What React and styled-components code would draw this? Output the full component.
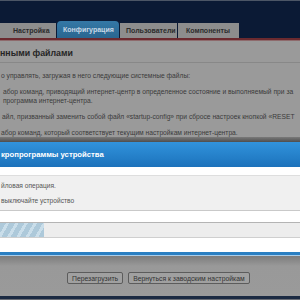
import React from "react";
import styled, { createGlobalStyle } from "styled-components";

const Global = createGlobalStyle`
  html, body { margin: 0; padding: 0; background: #9a9a9a; }
  body { font-family: "Liberation Sans", Arial, sans-serif; }
`;

const Page = styled.div`
  width: 300px;
  height: 300px;
  overflow: hidden;
  display: flex;
  flex-direction: column;
  background: #9a9a9a;
`;

const Header = styled.div`
  height: 37px;
  border-top: 1px solid #4c5666;
  background: #0b1a35;
  display: flex;
  align-items: flex-end;
`;

const TabBar = styled.div`
  display: flex;
  align-items: flex-end;
  gap: 1px;
`;

const Tab = styled.div`
  height: ${(p) => (p.$active ? "17px" : "15px")};
  width: ${(p) => p.$w}px;
  box-sizing: border-box;
  padding-left: ${(p) => p.$pl}px;
  display: flex;
  align-items: center;
  background: ${(p) => (p.$active ? "linear-gradient(#3478a6, #2a6690)" : "#8d8d8d")};
  color: ${(p) => (p.$active ? "#c9d8e6" : "#2c2c2c")};
  border-radius: ${(p) => (p.$active ? "4px 4px 0 0" : "0")};
  font-size: 7px;
  font-weight: bold;
  white-space: nowrap;
`;

const RedRule = styled.div`
  height: 2px;
  background: #6b2a2f;
  border-bottom: 1px solid #8e6a6c;
`;

const Content = styled.div`
  height: 97px;
  padding: 6px 0 0;
  box-sizing: border-box;
  overflow: hidden;
`;

const Heading = styled.div`
  font-size: 8.8px;
  font-weight: bold;
  line-height: 12px;
  color: #262626;
  padding: 0 0 3px 0;
  border-bottom: 1px solid #888888;
  white-space: nowrap;
`;

const Para = styled.div`
  font-size: 6.7px;
  line-height: 9px;
  color: #3a3a3a;
  white-space: nowrap;
  padding-left: ${(p) => p.$pl ?? 1}px;
  margin-top: ${(p) => p.$mt ?? 7}px;
`;

const Modal = styled.div`
  display: flex;
  flex-direction: column;
  background: #ffffff;
`;

const Shadow = styled.div`
  height: 5px;
  background: linear-gradient(#7a7a7a, #4e4e4e);
`;

const ModalTitle = styled.div`
  height: 25px;
  display: flex;
  align-items: center;
  padding-left: 1px;
  background: linear-gradient(#3193dc, #1c72bb);
  color: #ffffff;
  font-size: 7.7px;
  font-weight: bold;
  white-space: nowrap;
`;

const WhiteGap = styled.div`
  height: ${(p) => p.$h}px;
  background: #ffffff;
`;

const ModalBody = styled.div`
  background: #f0f0f0;
  border-top: 1px solid #dedede;
  border-bottom: 1px solid #c9c9c9;
  padding: 2px 0 2px 1px;
`;

const Note = styled.div`
  font-size: 6.6px;
  line-height: 15px;
  color: #555555;
  white-space: nowrap;
`;

const Track = styled.div`
  height: 14px;
  background: #ededed;
  border-top: 1px solid #b4b4b4;
  border-bottom: 1px solid #cfcfcf;
`;

const Fill = styled.div`
  height: 100%;
  background: repeating-linear-gradient(
    -60deg,
    #adc9da 0px,
    #adc9da 5px,
    #cadeea 5px,
    #cadeea 8px
  );
`;

const ModalBottom = styled.div`
  height: 3px;
  background: #2a7fc2;
  border-bottom: 1px solid #a9cdea;
`;

const ButtonBar = styled.div`
  height: 40px;
  box-sizing: border-box;
  padding: 16px 0 0 67px;
  display: flex;
  align-items: flex-start;
  gap: 5px;
  background: linear-gradient(#7c7c7c, #999999 10px, #9a9a9a);
`;

const Button = styled.div`
  height: 12px;
  box-sizing: border-box;
  border: 1px solid #5c5c5c;
  border-radius: 2px;
  background: #a0a0a0;
  color: #333333;
  font-size: 6.8px;
  display: flex;
  align-items: center;
  padding: 0 4px;
  white-space: nowrap;
`;

const Footer = styled.div`
  height: 3px;
  background: #1b2a42;
  border-bottom: 1px solid #6a6e76;
`;

export default function App() {
  return (
    <>
      <Global />
      <Page>
        <Header>
          <TabBar>
            <Tab $w={56} $pl={13}>Настройка</Tab>
            <Tab $w={62} $pl={6} $active>Конфигурация</Tab>
            <Tab $w={57} $pl={6}>Пользователи</Tab>
            <Tab $w={61} $pl={8}>Компоненты</Tab>
          </TabBar>
        </Header>
        <RedRule />
        <Content>
          <Heading>нными файлами</Heading>
          <Para $mt={8}>о управлять, загружая в него следующие системные файлы:</Para>
          <Para $pl={3}>абор команд, приводящий интернет-центр в определенное состояние и выполняемый при за</Para>
          <Para $pl={3} $mt={0}>программа интернет-центра.</Para>
          <Para $pl={2}>айл, призванный заменить собой файл «startup-config» при сбросе настроек кнопкой «RESET</Para>
          <Para $pl={1}>абор команд, который соответствует текущим настройкам интернет-центра.</Para>
        </Content>
        <Modal>
          <Shadow />
          <ModalTitle>кропрограммы устройства</ModalTitle>
          <WhiteGap $h={8} />
          <ModalBody>
            <Note>йловая операция.</Note>
            <Note>выключайте устройство</Note>
          </ModalBody>
          <WhiteGap $h={11} />
          <Track>
            <Fill style={{ width: 44 }} />
          </Track>
          <WhiteGap $h={14} />
          <ModalBottom />
        </Modal>
        <ButtonBar>
          <Button>Перезагрузить</Button>
          <Button>Вернуться к заводским настройкам</Button>
        </ButtonBar>
        <Footer />
      </Page>
    </>
  );
}
